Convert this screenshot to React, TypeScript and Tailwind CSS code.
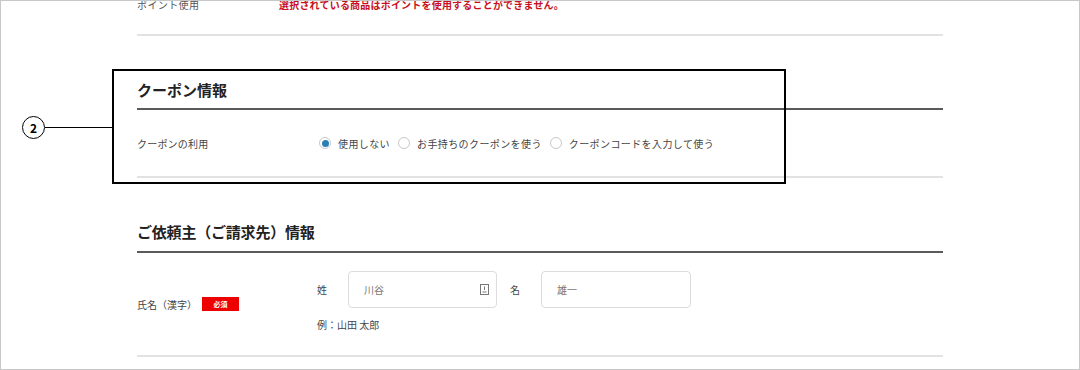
const FONT = {
  fontFamily:
    '"Noto Sans CJK JP", "Noto Sans", "Liberation Sans", sans-serif',
};

const Radio = ({ checked, label }: { checked?: boolean; label: string }) => (
  <label className="flex items-center gap-[7px]">
    <span className="flex size-[12px] items-center justify-center rounded-full border border-[#c8c8c8] bg-white">
      {checked && <span className="size-[7px] rounded-full bg-[#2b7db8]" />}
    </span>
    <span className="text-[10px] tracking-[0.4px] text-[#444]">{label}</span>
  </label>
);

const NameInput = ({
  placeholder,
  withIcon = false,
  width,
}: {
  placeholder: string;
  withIcon?: boolean;
  width: string;
}) => (
  <div
    className={`flex h-[37px] ${width} items-center justify-between rounded-[4px] border border-[#dcdcdc] bg-white pl-[15px] pr-[6px]`}
  >
    <span className="text-[10px] text-[#777]">{placeholder}</span>
    {withIcon && (
      <svg width="9" height="11" viewBox="0 0 9 11" className="mr-[1px]">
        <rect x="0.5" y="0.5" width="8" height="10" fill="none" stroke="#777" strokeWidth="1" />
        <rect x="4" y="2.5" width="1" height="3.5" fill="#777" />
        <rect x="2.5" y="7.5" width="4" height="1" fill="#777" />
      </svg>
    )}
  </div>
);

export default function App() {
  return (
    <div
      className="relative h-[370px] w-[1080px] overflow-hidden border border-[#c8c8c8] bg-white"
      style={FONT}
    >
      <div className="ml-[136px] w-[806px]">
        {/* ポイント */}
        <div className="flex h-[33px] items-start">
          <span className="w-[142px] text-[10px] leading-[8px] tracking-[0.4px] text-[#555]">
            ポイント使用
          </span>
          <span className="text-[10px] font-bold leading-[8px] tracking-[0.2px] text-[#c8101e]">
            選択されている商品はポイントを使用することができません。
          </span>
        </div>
        <div className="h-[2px] bg-[#e2e2e2]" />

        {/* クーポン情報 */}
        <h2 className="pt-[44px] pb-[8px] text-[15px] font-bold leading-[20px] text-[#222]">
          クーポン情報
        </h2>
        <div className="h-[2px] bg-[#5a5a5a]" />
        <div className="flex h-[66px] items-center">
          <span className="w-[182px] text-[10px] tracking-[0.2px] text-[#444]">
            クーポンの利用
          </span>
          <div className="flex items-center gap-[8px]">
            <Radio checked label="使用しない" />
            <Radio label="お手持ちのクーポンを使う" />
            <Radio label="クーポンコードを入力して使う" />
          </div>
        </div>
        <div className="h-[2px] bg-[#e2e2e2]" />

        {/* ご依頼主 */}
        <h2 className="pt-[44px] pb-[9px] text-[15px] font-bold leading-[20px] tracking-[-0.2px] text-[#222]">
          ご依頼主（ご請求先）情報
        </h2>
        <div className="h-[2px] bg-[#5a5a5a]" />
        <div className="flex h-[102px] items-center">
          <div className="flex w-[180px] items-center gap-[5px]">
            <span className="text-[10px] text-[#444]">氏名（漢字）</span>
            <span className="flex h-[14px] w-[37px] items-center justify-center bg-[#ee0000] text-[7px] font-bold text-white">
              必須
            </span>
          </div>
          <div className="flex flex-col self-start pt-[18px]">
            <div className="flex items-center">
              <span className="w-[31px] text-[10px] text-[#444]">姓</span>
              <NameInput placeholder="川谷" withIcon width="w-[149px]" />
              <span className="ml-[13px] w-[31px] text-[10px] text-[#444]">名</span>
              <NameInput placeholder="雄一" width="w-[150px]" />
            </div>
            <span className="mt-[11px] text-[10px] leading-[12px] text-[#444]">
              例：山田 太郎
            </span>
          </div>
        </div>
        <div className="h-[2px] bg-[#e2e2e2]" />
      </div>

      {/* annotation */}
      <div className="absolute left-[111px] top-[68px] h-[115px] w-[674px] border-2 border-black" />
      <div className="absolute left-[21px] top-[115px] flex size-[23px] items-center justify-center rounded-full border-[1.5px] border-black bg-white text-[12px] font-bold leading-none text-black">
        2
      </div>
      <div className="absolute left-[44px] top-[126px] h-[1px] w-[67px] bg-black" />
    </div>
  );
}
